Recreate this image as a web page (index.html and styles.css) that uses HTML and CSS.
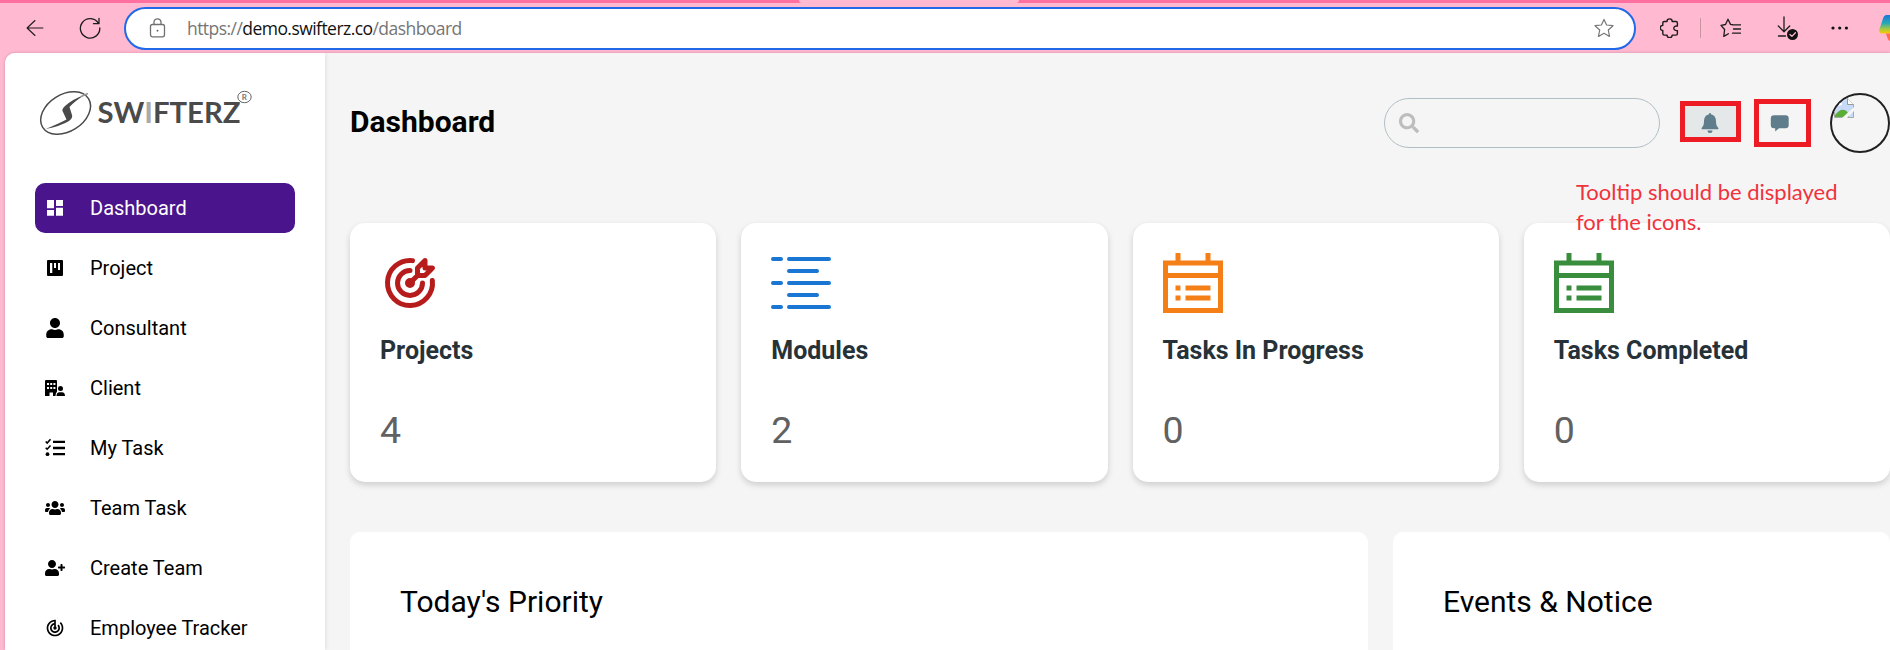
FILE: index.html
```html
<!DOCTYPE html>
<html lang="en">
<head>
<meta charset="utf-8">
<title>Dashboard</title>
<link rel="stylesheet" href="styles.css">
</head>
<body>
<div class="browser">
  <div class="tabstrip"><div class="active-tab"></div></div>
  <div class="toolbar">
    <svg class="tool back" viewBox="0 0 24 24"><path d="M21.5 12H2.5M12 3 2.5 12 12 21"/></svg>
    <svg class="tool reload" viewBox="0 0 24 24"><path d="M20.5 7.5A9.7 9.7 0 1 0 21.8 12M21 2.5v5.2h-5.5"/></svg>
    <div class="address">
      <svg class="lock" viewBox="0 0 18 20"><rect x="1.5" y="6.5" width="14" height="12.3" rx="2"/><path d="M5 6.5V4.3a3.5 3.5 0 0 1 7 0v2.2"/><circle cx="8.5" cy="12.7" r=".9"/></svg>
      <div class="url">https://<span class="host">demo.swifterz.co</span>/dashboard</div>
      <svg class="star" viewBox="0 0 20 20"><path d="m10 1.4 2.6 5.6 6.4.7-4.7 4.3 1.2 6.4L10 15.3l-5.5 3.1L5.7 12 1 7.7l6.4-.7Z"/></svg>
    </div>
    <svg class="tool puzzle" viewBox="0 0 20 20"><path d="M4.2 3.5H7a2.6 2.6 0 0 1 5.200 0h3.800q1.400 0 1.400 1.400v3.100c-4.800-.6-4.800 5.200 0 4.600v3.100q0 1.400-1.400 1.400h-3.800a2.600 2.600 0 0 1-5.200 0H4.200q-1.400 0-1.400-1.400v-3.300a2.500 2.500 0 0 1 0-5V4.900q0-1.400 1.400-1.400Z"/></svg>
    <span class="divider"></span>
    <svg class="tool favs" viewBox="0 0 21 20"><path d="M12.500 6.600 10.500 6.400 8 1.200 5.500 6.500 1 7.300l3.600 4.200-.8 6.900 4.600-2.600M12 6.800h8.500M13.500 11h7M12.500 15.200h8"/></svg>
    <svg class="tool download" viewBox="0 0 22 24"><path d="M7 1v14.500M1.300 10 7 15.700l5.700-5.700M1.500 20h7"/><circle class="badge" cx="15.500" cy="18.500" r="5.500"/><path class="tick" d="m13 18.500 1.900 1.900 3.500-3.600"/></svg>
    <svg class="dots" viewBox="0 0 18 4"><circle cx="2" cy="2" r="1.600"/><circle cx="8.700" cy="2" r="1.600"/><circle cx="15.400" cy="2" r="1.600"/></svg>
    <svg class="copilot" viewBox="0 0 11 26">
      <defs><linearGradient id="cp" x1="0" y1="0" x2="0" y2="1"><stop offset="0" stop-color="#1877d8"/><stop offset=".45" stop-color="#28a9b5"/><stop offset=".75" stop-color="#a3c940"/><stop offset="1" stop-color="#ffc800"/></linearGradient></defs>
      <path d="M11 0H7.500Q5 0 4 3.500L.5 14Q-.5 18.500 3 18.500h8Z" fill="url(#cp)"/><path d="M7 18.500h4V26q-2.500-1-4-7.500Z" fill="#ff6a50"/>
    </svg>
  </div>
</div>

<div class="app">
  <aside class="sidebar">
    <svg class="logo" viewBox="0 0 230 60">
      <ellipse cx="30.600" cy="30" rx="27" ry="18.500" transform="rotate(-32 30.600 30)" fill="none" stroke="#4a4a4a" stroke-width="1.500"/>
      <path d="M10.500 46 Q23 41 31.500 36.500 L28 29 Q26 26.500 30 23 Q38 16 50 11.800 Q40 18 34.500 24 L37 32 Q38 35 34 38 Q26 43 10.500 46Z" fill="#4a4a4a"/>
      <path d="M46 13.500 53 10.500" stroke="#999" stroke-width="1.500"/>
      <text class="wordmark" x="62.500" y="39.500" textLength="143" lengthAdjust="spacingAndGlyphs">SW<tspan class="light">I</tspan>FTERZ</text>
      <ellipse cx="209.500" cy="14" rx="6.700" ry="5.700" fill="none" stroke="#666" stroke-width="1"/>
      <text class="reg" x="206.800" y="17">R</text>
    </svg>
    <nav class="nav">
      <a class="item active"><svg viewBox="0 0 20 20"><path d="M2 2h7v8.300H2ZM2 12h7v5.800H2ZM11 2h7v6h-7ZM11 9.700h7v8.100h-7Z"/></svg>Dashboard</a>
      <a class="item"><svg viewBox="0 0 20 20"><path fill-rule="evenodd" d="M3 2h14q1 0 1 1v14q0 1-1 1H3q-1 0-1-1V3q0-1 1-1ZM5 5v10h2.300V5ZM9 5v5h2V5ZM13 5v7h2V5Z"/></svg>Project</a>
      <a class="item"><svg viewBox="0 0 448 512"><path d="M224 256c70.700 0 128-57.300 128-128S294.700 0 224 0 96 57.300 96 128s57.300 128 128 128zm89.600 32h-16.700c-22.200 10.200-46.900 16-72.900 16s-50.600-5.800-72.900-16h-16.700C60.200 288 0 348.200 0 422.400V464c0 26.500 21.500 48 48 48h352c26.500 0 48-21.500 48-48v-41.600c0-74.200-60.200-134.400-134.400-134.400z"/></svg>Consultant</a>
      <a class="item"><svg viewBox="0 0 20 20"><path fill-rule="evenodd" d="M1 2h10q1 0 1 1v10.500q-1.500 1.500-1.500 4.500H8v-3.500H4.500V18H0V3q0-1 1-1ZM2 5v2h2V5ZM5.200 5v2h2V5ZM8.400 5v2h2V5ZM2 9v2h2V9ZM5.200 9v2h2V9ZM8.400 9v2h2V9Z"/><circle cx="15.500" cy="10.500" r="2.500"/><path d="M11.500 18q0-3.800 3-3.800h2.500q3 0 3 3.800Z"/></svg>Client</a>
      <a class="item"><svg viewBox="0 0 20 20"><path d="M8 2.700h12v2.300H8ZM8 8.800h12v2.400H8ZM8 15h12v2.300H8Z"/><path d="m.7 3.500 1.500 1.500L5.500 1.300M.7 9.700l1.500 1.500L5.500 7.500" fill="none" stroke="#000" stroke-width="1.600"/><circle cx="2.500" cy="16.200" r="1.900"/></svg>My Task</a>
      <a class="item"><svg viewBox="0 0 640 512"><path d="M96 224c35.300 0 64-28.700 64-64s-28.700-64-64-64-64 28.700-64 64 28.700 64 64 64zm448 0c35.300 0 64-28.700 64-64s-28.700-64-64-64-64 28.700-64 64 28.700 64 64 64zm32 32h-64c-17.600 0-33.500 7.100-45.100 18.600 40.300 22.100 68.900 62 75.100 109.400h66c17.700 0 32-14.300 32-32v-32c0-35.300-28.700-64-64-64zm-256 0c61.900 0 112-50.100 112-112S381.900 32 320 32 208 82.100 208 144s50.100 112 112 112zm76.800 32h-8.300c-20.800 10-43.900 16-68.500 16s-47.600-6-68.500-16h-8.300C179.600 288 128 339.600 128 403.200V432c0 26.500 21.500 48 48 48h288c26.500 0 48-21.500 48-48v-28.800c0-63.600-51.600-115.200-115.200-115.200zm-223.700-13.400C161.500 263.100 145.600 256 128 256H64c-35.300 0-64 28.700-64 64v32c0 17.700 14.300 32 32 32h65.900c6.300-47.400 34.900-87.300 75.200-109.400z"/></svg>Team Task</a>
      <a class="item"><svg viewBox="0 0 640 512"><path d="M624 208h-64v-64c0-8.800-7.200-16-16-16h-32c-8.800 0-16 7.200-16 16v64h-64c-8.800 0-16 7.200-16 16v32c0 8.800 7.200 16 16 16h64v64c0 8.800 7.200 16 16 16h32c8.800 0 16-7.200 16-16v-64h64c8.800 0 16-7.200 16-16v-32c0-8.800-7.200-16-16-16zm-400 48c70.700 0 128-57.300 128-128S294.700 0 224 0 96 57.300 96 128s57.300 128 128 128zm89.600 32h-16.700c-22.200 10.200-46.900 16-72.900 16s-50.600-5.800-72.900-16h-16.700C60.200 288 0 348.200 0 422.400V464c0 26.500 21.500 48 48 48h352c26.500 0 48-21.500 48-48v-41.600c0-74.200-60.200-134.400-134.400-134.400z"/></svg>Create Team</a>
      <a class="item"><svg viewBox="0 0 24 24"><path d="M19.070 4.930l-1.410 1.410C19.100 7.790 20 9.790 20 12c0 4.420-3.580 8-8 8s-8-3.580-8-8c0-4.080 3.050-7.440 7-7.930v2.020C8.160 6.570 6 9.030 6 12c0 3.310 2.690 6 6 6s6-2.690 6-6c0-1.660-.67-3.160-1.760-4.240l-1.410 1.410C15.550 9.900 16 10.900 16 12c0 2.210-1.790 4-4 4s-4-1.790-4-4c0-1.860 1.280-3.410 3-3.860v2.140c-.6.350-1 .98-1 1.720 0 1.100.9 2 2 2s2-.9 2-2c0-.74-.4-1.380-1-1.720V2h-1C6.480 2 2 6.480 2 12s4.480 10 10 10 10-4.480 10-10c0-2.760-1.120-5.260-2.930-7.070z"/></svg>Employee Tracker</a>
    </nav>
  </aside>

  <main class="main">
    <header class="header">
      <h1>Dashboard</h1>
      <div class="search"><svg viewBox="0 0 512 512"><path d="M505 442.700L405.300 343c-4.500-4.500-10.600-7-17-7H372c27.600-35.300 44-79.700 44-128C416 93.100 322.900 0 208 0S0 93.100 0 208s93.100 208 208 208c48.300 0 92.700-16.400 128-44v16.300c0 6.400 2.500 12.500 7 17l99.700 99.700c9.400 9.400 24.600 9.400 33.900 0l28.300-28.300c9.400-9.400 9.400-24.600.1-34zM208 336c-70.700 0-128-57.200-128-128 0-70.700 57.200-128 128-128 70.700 0 128 57.200 128 128 0 70.700-57.200 128-128 128z"/></svg></div>
      <div class="mark bell"><svg viewBox="0 0 20 20"><path d="M10 0q1.300 0 1.300 1.500C14.500 2.200 16 4.700 16 8c0 4.500 1.200 5.500 2.200 6.700q.8 1-.2 1.600H2q-1-.6-.2-1.600C2.800 13.500 4 12.500 4 8c0-3.300 1.500-5.800 4.700-6.500Q8.700 0 10 0ZM7.500 17.500h5a2.500 2.500 0 0 1-5 0Z"/></svg></div>
      <div class="mark chat"><svg viewBox="0 0 20 20"><path d="M4 2.300h11.500q3.200 0 3.200 3.200v6.500q0 3.200-3.200 3.200H9L5.200 18.500v-3.300H4Q.8 15.200.8 12V5.500q0-3.200 3.200-3.200Z"/></svg></div>
      <div class="avatar"><svg viewBox="0 0 20 20"><path d="M.5.5h13l6 6v13H.5Z" fill="#c7daf7" stroke="#aaa"/><path d="M13.500.5v6h6" fill="#fff" stroke="#999"/><ellipse cx="5" cy="6" rx="3" ry="1.700" fill="#fff"/><path d="M1 19v-2q8-10 14-1v3Z" fill="#5bae35"/><path d="m8 20 12-11v4l-7 7Z" fill="#f5f5f5"/></svg></div>
    </header>

    <section class="cards">
      <article class="card">
        <svg class="target" viewBox="0 0 24 24"><circle cx="12" cy="12" r="1"/><path d="M12 7a5 5 0 1 0 5 5M13 3.055a9 9 0 1 0 7.941 7.945M15 6v3h3l3-3h-3V3zM15 9l-3 3"/></svg>
        <h2>Projects</h2><p>4</p>
      </article>
      <article class="card">
        <svg class="modules" viewBox="0 0 60 60"><path d="M2 6h8M18 6h40M18 18h28M2 30h8M18 30h40M18 42h28M2 54h8M18 54h40"/></svg>
        <h2>Modules</h2><p>2</p>
      </article>
      <article class="card">
        <svg class="progress" viewBox="0 0 60 60"><path fill-rule="evenodd" d="M12.500 0h5v7.500h25V0h5v7.500H60V60H0V7.500h12.500ZM5 12.500V20h50v-7.500ZM5 25v30h50V25Z"/><path d="M12.500 32.500h5v5h-5ZM22.500 32.500h25v5h-25ZM12.500 42.500h5v5h-5ZM22.500 42.500h25v5h-25Z"/></svg>
        <h2>Tasks In Progress</h2><p>0</p>
      </article>
      <article class="card">
        <svg class="completed" viewBox="0 0 60 60"><path fill-rule="evenodd" d="M12.500 0h5v7.500h25V0h5v7.500H60V60H0V7.500h12.500ZM5 12.500V20h50v-7.500ZM5 25v30h50V25Z"/><path d="M12.500 32.500h5v5h-5ZM22.500 32.500h25v5h-25ZM12.500 42.500h5v5h-5ZM22.500 42.500h25v5h-25Z"/></svg>
        <h2>Tasks Completed</h2><p>0</p>
      </article>
    </section>

    <section class="panels">
      <article class="panel"><h3>Today's Priority</h3></article>
      <article class="panel"><h3>Events &amp; Notice</h3></article>
    </section>
  </main>
</div>
<div class="note">Tooltip should be displayed<br>for the icons.</div>
</body>
</html>
```
FILE: styles.css
```css
* { box-sizing: border-box; }
body {
  margin: 0;
  width: 1890px;
  height: 650px;
  overflow: hidden;
  position: relative;
  background: #ffb9d0;
  font-family: Roboto, sans-serif;
}
h1, h2, h3, p { margin: 0; }
svg { display: block; flex: none; }

/* Browser chrome */
.browser { height: 53px; }
.tabstrip { height: 3px; background: #ff6f9f; }
.active-tab { width: 220px; height: 3px; margin-left: 799px; background: #ffb9d0; border-radius: 0 0 3px 3px; }
.toolbar { height: 50px; display: flex; align-items: center; padding: 0 0 0 23px; }
.tool { fill: none; stroke: #1c1c1c; stroke-width: 1.300; stroke-linejoin: round; stroke-linecap: round; }
.back { width: 24px; height: 20px; }
.reload { width: 24px; height: 24px; margin-left: 31px; }
.address {
  width: 1512px;
  height: 43px;
  flex: none;
  margin: 0 24px 0 22px;
  border: 2px solid #2169e8;
  border-radius: 22px;
  background: #fff;
  display: flex;
  align-items: center;
  padding: 0 20px 0 23px;
}
.lock { width: 18px; height: 20px; fill: none; stroke: #707070; stroke-width: 1.300; }
.lock circle { fill: #555; stroke: none; }
.url {
  margin-left: 20px;
  flex: 1;
  font: 17.500px/24px "Open Sans", sans-serif;
  letter-spacing: -0.550px;
  color: #757575;
}
.host { color: #111; }
.star { width: 20px; height: 20px; fill: none; stroke: #777; stroke-width: 1.200; stroke-linejoin: round; }
.puzzle { width: 20px; height: 20px; stroke-width: 1.400; }
.divider { width: 2px; height: 20px; margin: 0 19px 0 20px; background: #c9939f; }
.favs { width: 21px; height: 20px; }
.download { width: 22px; height: 24px; margin-left: 36px; }
.download .badge { fill: #111; stroke: none; }
.download .tick { stroke: #ffb9d0; }
.dots { width: 18px; height: 4px; margin-left: 32px; fill: #111; }
.copilot { width: 11px; height: 26px; margin-left: 30px; }

/* App shell */
.app {
  height: 597px;
  margin-left: 5px;
  display: flex;
  background: #f5f5f5;
  border-top-left-radius: 10px;
  box-shadow: 0 0 3px rgba(120, 60, 80, 0.350);
  overflow: hidden;
}
.sidebar {
  width: 320px;
  flex: none;
  padding: 30px 30px 0;
  background: #fff;
  box-shadow: 0 0 5px rgba(0, 0, 0, 0.120);
}
.logo { width: 230px; height: 60px; }
.wordmark { font: 700 28px Lato, sans-serif; fill: #4a4a4a; }
.wordmark .light { fill: #aaa; }
.reg { font: 700 8px Lato, sans-serif; fill: #777; }
.nav { margin-top: 40px; display: grid; gap: 10px; }
.item {
  height: 50px;
  display: flex;
  align-items: center;
  gap: 25px;
  padding-left: 10px;
  border-radius: 10px;
  font-size: 20px;
  color: #000;
}
.item svg { width: 20px; height: 20px; fill: currentColor; }
.item.active { background: #4a148c; color: #fff; }

.main { flex: 1; padding: 40px 0 0 25px; }
.header { height: 60px; display: flex; align-items: center; }
.header h1 { flex: 1; padding-bottom: 2px; font-size: 30px; line-height: 40px; font-weight: 700; }
.search {
  width: 276px;
  height: 50px;
  border: 1px solid #b0bec5;
  border-radius: 25px;
  display: flex;
  align-items: center;
  padding-left: 14px;
}
.search svg { width: 20px; height: 20px; fill: #bdbdbd; }
.mark { border: 5px solid #ed1c24; display: flex; align-items: center; justify-content: center; }
.mark svg { width: 20px; height: 20px; fill: #607d8b; }
.bell { width: 61px; height: 41px; margin: 0 13px 3px 20px; background: #e4e8e9; padding: 3px 2px 0 0; }
.chat { width: 57px; height: 48px; margin-right: 19px; padding-right: 5px; }
.avatar { width: 60px; height: 60px; border: 2px solid #212121; border-radius: 50%; overflow: hidden; padding: 3px 0 0 2px; }
.avatar svg { width: 20px; height: 20px; }

.cards { margin-top: 70px; display: grid; grid-template-columns: repeat(4, 1fr); gap: 25px; }
.card {
  height: 259px;
  padding: 30px;
  border-radius: 15px;
  background: #fff;
  box-shadow: 0 3px 6px rgba(0, 0, 0, 0.160);
}
.card svg { width: 60px; height: 60px; }
.card h2 { margin-top: 23px; font-size: 25px; line-height: 30px; font-weight: 700; color: #263238; }
.card p { margin-top: 42px; font-size: 37.500px; line-height: 44px; color: #616161; }
.target { fill: none; stroke: #b71c1c; stroke-width: 2; stroke-linecap: round; stroke-linejoin: round; }
.modules { fill: none; stroke: #1976d2; stroke-width: 4; stroke-linecap: round; }
.progress { fill: #f57f17; }
.completed { fill: #388e3c; }

.panels { margin-top: 50px; display: grid; grid-template-columns: 1018px 1fr; gap: 25px; }
.panel { height: 200px; padding: 50px; border-radius: 10px; background: #fff; }
.panel h3 { font-size: 30px; line-height: 40px; font-weight: 400; }

/* Reviewer's annotation laid over the page */
.note {
  position: absolute;
  left: 1576px;
  top: 177px;
  font: 22px/29.500px Lato, sans-serif;
  color: #f0323c;
  white-space: nowrap;
}
```
